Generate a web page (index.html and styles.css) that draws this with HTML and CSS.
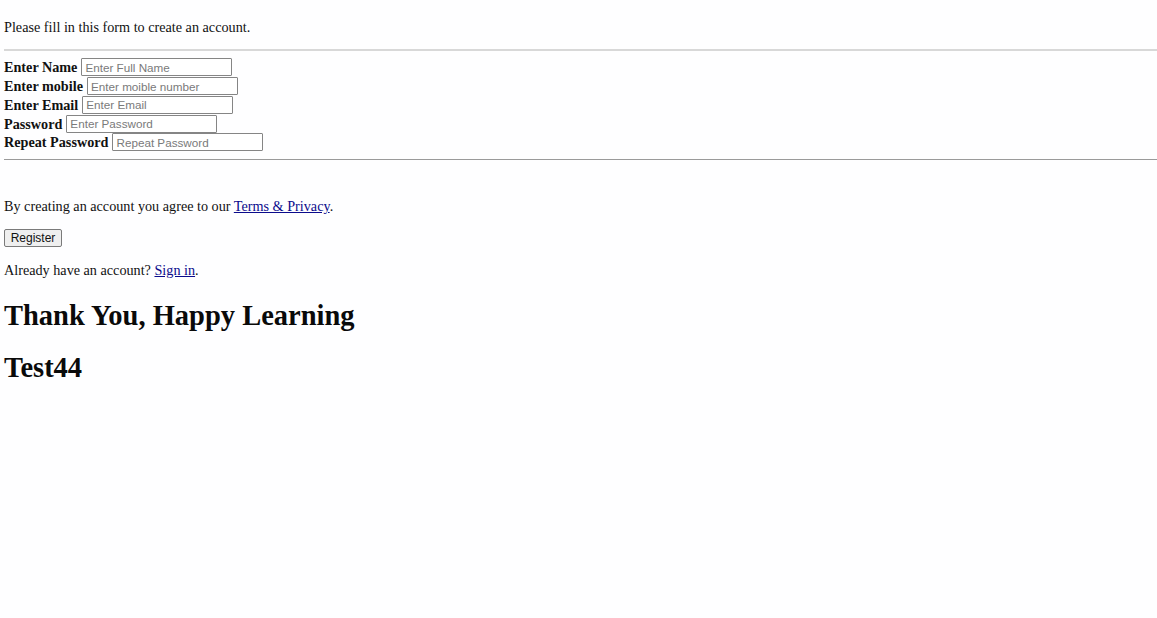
FILE: index.html
```html
<!DOCTYPE html>
<html>
<head>
<meta charset="utf-8">
<link rel="stylesheet" href="styles.css">
</head>
<body>
<div class="page">
  <p class="intro">Please fill in this form to create an account.</p>
  <hr class="rule-light">
  <form class="fields">
    <div class="row"><label class="lbl">Enter Name</label><input class="field" type="text" placeholder="Enter Full Name"></div>
    <div class="row"><label class="lbl">Enter mobile</label><input class="field" type="text" placeholder="Enter moible number"></div>
    <div class="row"><label class="lbl">Enter Email</label><input class="field" type="text" placeholder="Enter Email"></div>
    <div class="row"><label class="lbl">Password</label><input class="field" type="password" placeholder="Enter Password"></div>
    <div class="row"><label class="lbl">Repeat Password</label><input class="field" type="password" placeholder="Repeat Password"></div>
  </form>
  <hr class="rule-dark">
  <p class="terms">By creating an account you agree to our <a href="#">Terms &amp; Privacy</a>.</p>
  <button class="btn" type="button">Register</button>
  <p class="signin">Already have an account? <a href="#">Sign in</a>.</p>
  <h1 class="big first">Thank You, Happy Learning</h1>
  <h1 class="big second">Test44</h1>
</div>
</body>
</html>
```

FILE: styles.css
```css
html, body {
  margin: 0;
  padding: 0;
  background: #fefeff;
}
.page {
  padding: 0 4px;
  font-family: "Liberation Serif", "Times New Roman", serif;
  font-size: 14.2px;
  line-height: 16px;
  color: #111;
  display: flex;
  flex-direction: column;
  align-items: flex-start;
}
.intro {
  margin: 19px 0 0 0;
}
.rule-light {
  align-self: stretch;
  margin: 14px -4px 0 0;
  border: none;
  height: 2px;
  background: #d8d8d8;
}
.fields {
  display: flex;
  flex-direction: column;
  margin-top: 7px;
}
.row {
  display: flex;
  align-items: center;
  height: 18.75px;
}
.lbl {
  font-weight: bold;
  margin-right: 4px;
}
.field {
  box-sizing: border-box;
  width: 151px;
  height: 18px;
  margin: 0;
  padding: 1px 3px;
  border: 1px solid #858585;
  border-radius: 1px;
  font-family: "Liberation Sans", Arial, sans-serif;
  font-size: 11.7px;
  background: #fff;
}
.field::placeholder {
  color: #7a7a7a;
}
.rule-dark {
  align-self: stretch;
  margin: 7px -4px 0 0;
  border: none;
  height: 1px;
  background: #9a9a9a;
}
.terms {
  margin: 38px 0 0 0;
}
.terms a, .signin a {
  color: #0b0b8c;
}
.btn {
  margin-top: 15px;
  box-sizing: border-box;
  height: 18px;
  width: 58px;
  padding: 0;
  font-family: "Liberation Sans", Arial, sans-serif;
  font-size: 12px;
  color: #111;
  background: #efefef;
  border: 1px solid #7a7a7a;
  border-radius: 2px;
}
.signin {
  margin: 15px 0 0 0;
}
.big {
  font-size: 28.5px;
  line-height: 32px;
  margin: 0;
  color: #0a0a0a;
}
.first {
  margin-top: 22px;
}
.second {
  margin-top: 20px;
}
```
